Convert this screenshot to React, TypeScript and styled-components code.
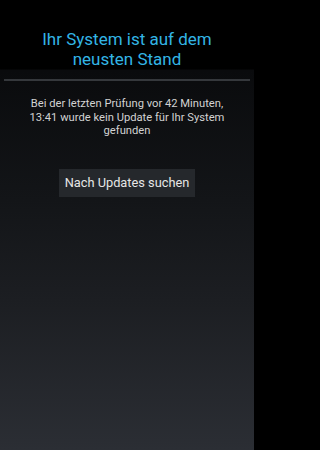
import React from "react";
import styled, { createGlobalStyle } from "styled-components";

const Global = createGlobalStyle`
  html, body { margin: 0; padding: 0; background: #000; }
  body { width: 254px; height: 450px; overflow: hidden; }
`;

const Screen = styled.div`
  width: 254px;
  height: 450px;
  display: flex;
  flex-direction: column;
  font-family: Roboto, "Noto Sans", sans-serif;
  background: linear-gradient(to bottom, #000 0px, #000 69px, #0a0b0d 70px, #131518 200px, #1c1e22 300px, #2b2e34 450px);
`;

const Header = styled.header`
  height: 69px;
  display: flex;
  align-items: flex-end;
  justify-content: center;
  box-sizing: border-box;
`;

const Title = styled.h1`
  margin: 0;
  font-weight: 400;
  font-size: 17px;
  line-height: 20px;
  color: #33b5e5;
  text-align: center;
`;

const Divider = styled.div`
  margin: 10px 4px 0 4px;
  height: 2px;
  background: #35383c;
`;

const Content = styled.main`
  display: flex;
  flex-direction: column;
  align-items: center;
  padding: 16px 12px 0;
`;

const Message = styled.p`
  margin: 0;
  font-size: 11.2px;
  line-height: 13.5px;
  color: #d2d2d2;
  text-align: center;
`;

const Button = styled.button`
  margin-top: 31px;
  width: 136px;
  height: 28px;
  border: none;
  background: #25282c;
  color: #e6e6e6;
  font-family: inherit;
  font-size: 12.8px;
  padding: 0;
  cursor: pointer;
`;

export default function App() {
  return (
    <>
      <Global />
      <Screen>
        <Header>
          <Title>
            Ihr System ist auf dem
            <br />
            neusten Stand
          </Title>
        </Header>
        <Divider />
        <Content>
          <Message>
            Bei der letzten Prüfung vor 42 Minuten,
            <br />
            13:41 wurde kein Update für Ihr System
            <br />
            gefunden
          </Message>
          <Button>Nach Updates suchen</Button>
        </Content>
      </Screen>
    </>
  );
}
